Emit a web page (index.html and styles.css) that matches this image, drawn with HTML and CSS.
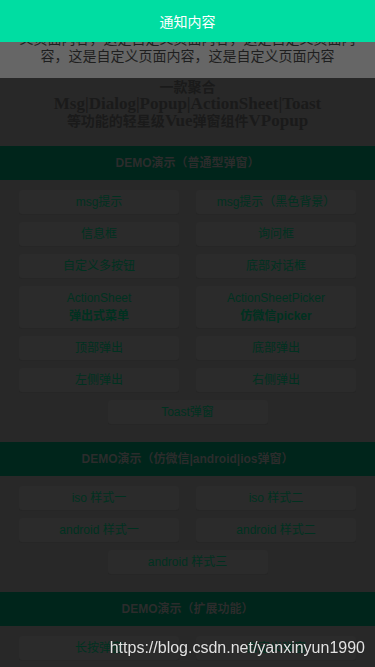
FILE: index.html
```html
<!DOCTYPE html>
<html lang="zh-CN">
<head>
<meta charset="utf-8">
<meta name="viewport" content="width=device-width, initial-scale=1">
<title>VPopup</title>
<link rel="stylesheet" href="styles.css">
</head>
<body>
  <div class="top-panel">
    <p class="top-text">这是自定义页面内容，这是自定义页面内容，这是自定义页面内容，这是自定义页面内容，这是自定义页面内容，这是自定义页面内容，这是自定义页面内容</p>
  </div>

  <h1 class="title">
    <span class="cn">一款聚合</span><br>
    Msg|Dialog|Popup|ActionSheet|Toast<br>
    <span class="cn">等功能的轻星级</span>Vue<span class="cn">弹窗组件</span>VPopup
  </h1>

  <section class="demo">
    <h2 class="demo-head">DEMO演示（普通型弹窗）</h2>
    <div class="grid">
      <a class="btn">msg提示</a>
      <a class="btn">msg提示（黑色背景）</a>
      <a class="btn">信息框</a>
      <a class="btn">询问框</a>
      <a class="btn">自定义多按钮</a>
      <a class="btn">底部对话框</a>
      <a class="btn">ActionSheet<br><b>弹出式菜单</b></a>
      <a class="btn">ActionSheetPicker<br><b>仿微信picker</b></a>
      <a class="btn">顶部弹出</a>
      <a class="btn">底部弹出</a>
      <a class="btn">左侧弹出</a>
      <a class="btn">右侧弹出</a>
      <a class="btn">Toast弹窗</a>
    </div>
  </section>

  <section class="demo">
    <h2 class="demo-head">DEMO演示（仿微信|android|ios弹窗）</h2>
    <div class="grid">
      <a class="btn">iso 样式一</a>
      <a class="btn">iso 样式二</a>
      <a class="btn">android 样式一</a>
      <a class="btn">android 样式二</a>
      <a class="btn">android 样式三</a>
    </div>
  </section>

  <section class="demo">
    <h2 class="demo-head">DEMO演示（扩展功能）</h2>
    <div class="grid">
      <a class="btn">长按弹窗</a>
      <a class="btn">自定义弹窗</a>
    </div>
  </section>

  <div class="notice">通知内容</div>
  <div class="watermark">https://blog.csdn.net/yanxinyun1990</div>
</body>
</html>
```

FILE: styles.css
```css
* {
  box-sizing: border-box;
}

html, body {
  margin: 0;
  padding: 0;
}

body {
  background: #282828;
  font-family: "Liberation Sans", Arial, "Noto Sans CJK SC", sans-serif;
  color: #1c1c1c;
  height: 667px;
  overflow: hidden;
}

.top-panel {
  height: 78px;
  background: #666666;
  display: flex;
  flex-direction: column;
  justify-content: flex-end;
  overflow: hidden;
  padding: 0 19px 13px;
}

.top-text {
  margin: 0;
  font-size: 14px;
  line-height: 17px;
  text-align: center;
  color: #1e1e1e;
}

.title {
  margin: 0 0 17px;
  font-family: "Liberation Serif", "Times New Roman", "Noto Sans CJK SC", serif;
  font-size: 17px;
  font-weight: bold;
  line-height: 17px;
  text-align: center;
  color: #1a1a1a;
}

.title .cn {
  font-family: "Noto Sans CJK SC", sans-serif;
  font-size: 14px;
}

.demo {
  margin-bottom: 18px;
}

.demo-head {
  margin: 0;
  height: 34px;
  line-height: 34px;
  background: #00251b;
  color: #2c2c2c;
  font-size: 12px;
  font-weight: bold;
  text-align: center;
}

.grid {
  display: flex;
  flex-wrap: wrap;
  justify-content: center;
  gap: 8px 17px;
  padding: 10px 19px 0;
}

.btn {
  display: block;
  width: 160px;
  padding: 3px 4px;
  line-height: 18px;
  font-size: 12px;
  text-align: center;
  color: #003120;
  background: #2b2b2b;
  border-radius: 3px;
  box-shadow: 0 1px 0 #262626;
}

.btn b {
  font-weight: bold;
}

.notice {
  position: fixed;
  top: 0;
  left: 0;
  right: 0;
  height: 42px;
  line-height: 42px;
  background: #00dda2;
  color: #ffffff;
  font-size: 14px;
  text-align: center;
  font-family: "Noto Sans CJK SC", sans-serif;
}

.watermark {
  position: fixed;
  right: 10px;
  bottom: 10px;
  font-family: "Liberation Sans", Arial, sans-serif;
  font-size: 16px;
  line-height: 18px;
  color: #e2e2e2;
  text-shadow: 0 0 1px rgba(0, 0, 0, 0.5);
}
```
